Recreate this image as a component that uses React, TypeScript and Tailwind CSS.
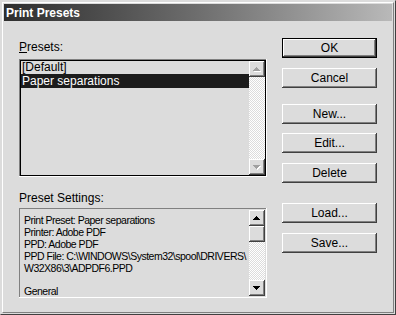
import React from 'react';

const FACE = 'bg-[#dcdcdc]';

// raised 3d edge used by buttons and scrollbar parts
const RAISED =
  'shadow-[inset_-1px_-1px_#404040,inset_1px_1px_#ffffff,inset_-2px_-2px_#808080,inset_2px_2px_#dcdcdc]';
const RAISED_DEFAULT =
  'shadow-[inset_-1px_-1px_#000000,inset_1px_1px_#000000,inset_-2px_-2px_#404040,inset_2px_2px_#ffffff,inset_-3px_-3px_#808080]';

function Arrow({ dir, disabled }: { dir: 'up' | 'down'; disabled?: boolean }) {
  const rows = dir === 'up' ? [0, 1, 2, 3] : [3, 2, 1, 0];
  const fill = disabled ? '#a0a0a0' : '#000000';
  return (
    <svg width="8" height="5" viewBox="0 0 8 5" shapeRendering="crispEdges">
      {disabled &&
        rows.map((w, i) => (
          <rect key={'s' + i} x={3 - w + 1} y={i + 1} width={w * 2 + 1} height={1} fill="#ffffff" />
        ))}
      {rows.map((w, i) => (
        <rect key={i} x={3 - w} y={i} width={w * 2 + 1} height={1} fill={fill} />
      ))}
    </svg>
  );
}

function ScrollButton({ dir, disabled }: { dir: 'up' | 'down'; disabled?: boolean }) {
  return (
    <div className={`w-[16px] h-[16px] shrink-0 flex items-center justify-center ${FACE} ${RAISED}`}>
      <Arrow dir={dir} disabled={disabled} />
    </div>
  );
}

function ScrollBar({ disabled, thumb }: { disabled?: boolean; thumb?: boolean }) {
  return (
    <div className="w-[16px] flex flex-col shrink-0">
      <ScrollButton dir="up" disabled={disabled} />
      <div className="flex-1 bg-[image:repeating-conic-gradient(#ffffff_0_25%,#dcdcdc_0_50%)] bg-[length:2px_2px]">
        {thumb && <div className={`w-[16px] h-[16px] ${FACE} ${RAISED}`} />}
      </div>
      <ScrollButton dir="down" disabled={disabled} />
    </div>
  );
}

function Button({ label, isDefault }: { label: string; isDefault?: boolean }) {
  return (
    <button
      className={`w-[95px] h-[20px] flex items-center justify-center text-[12px] text-black ${FACE} ${
        isDefault ? RAISED_DEFAULT : RAISED
      }`}
    >
      {label}
    </button>
  );
}

const SETTINGS = [
  'Print Preset: Paper separations',
  'Printer: Adobe PDF',
  'PPD: Adobe PDF',
  'PPD File: C:\\WINDOWS\\System32\\spool\\DRIVERS\\',
  'W32X86\\3\\ADPDF6.PPD',
  '',
];

export default function App() {
  return (
    <div
      className={`w-[396px] h-[315px] ${FACE} font-['Liberation_Sans',Arial,sans-serif] text-black p-[1px] border border-t-[#dcdcdc] border-l-[#dcdcdc] border-b-[#404040] border-r-[#404040] overflow-hidden`}
    >
      <div className="h-full flex flex-col p-[1px] border border-t-white border-l-white border-b-[#808080] border-r-[#808080]">
        {/* title bar */}
        <div className="h-[17px] shrink-0 flex items-center pl-[2px] bg-gradient-to-r from-[#2e2e2e] via-[#6e6e6e] to-[#b9b9b9]">
          <span className="text-white font-bold text-[12px] leading-none">Print Presets</span>
        </div>

        <div className="flex flex-1 pl-[15px] pr-[15px]">
          {/* left column */}
          <div className="w-[248px] flex flex-col">
            <div className="mt-[19px] h-[14px] text-[12px] leading-[14px]">
              <span className="underline">P</span>resets:
            </div>
            <div className="mt-[5px] h-[118px] flex p-[2px] shadow-[inset_-1px_-1px_#ffffff,inset_1px_1px_#808080,inset_-2px_-2px_#000000,inset_2px_2px_#000000]">
              <div className="flex-1 flex flex-col text-[12px] leading-[13px]">
                <div className="h-[13px] pl-[1px]">[Default]</div>
                <div className="h-[14px] leading-[14px] pl-[1px] bg-[#1c1c1c] text-white">Paper separations</div>
              </div>
              <ScrollBar disabled />
            </div>

            <div className="mt-[14px] h-[14px] text-[12px] leading-[14px]">Preset Settings:</div>
            <div className="mt-[3px] h-[90px] flex p-[2px] shadow-[inset_-1px_-1px_#ffffff,inset_1px_1px_#808080]">
              <div className="flex-1 overflow-hidden pl-[3px] pt-[4px] text-[10.5px] leading-[12px] tracking-[-0.5px] whitespace-pre">
                {SETTINGS.map((line, i) => (
                  <div key={i} className="h-[12px]">
                    {line}
                  </div>
                ))}
                <div className="h-[10px] leading-[10px]">General</div>
              </div>
              <ScrollBar thumb />
            </div>
          </div>

          <div className="flex-1" />

          {/* right column */}
          <div className="w-[95px] flex flex-col">
            <div className="mt-[17px]">
              <Button label="OK" isDefault />
            </div>
            <div className="mt-[10px]">
              <Button label="Cancel" />
            </div>
            <div className="mt-[16px]">
              <Button label="New..." />
            </div>
            <div className="mt-[9px]">
              <Button label="Edit..." />
            </div>
            <div className="mt-[10px]">
              <Button label="Delete" />
            </div>
            <div className="mt-[20px]">
              <Button label="Load..." />
            </div>
            <div className="mt-[10px]">
              <Button label="Save..." />
            </div>
          </div>
        </div>
      </div>
    </div>
  );
}
